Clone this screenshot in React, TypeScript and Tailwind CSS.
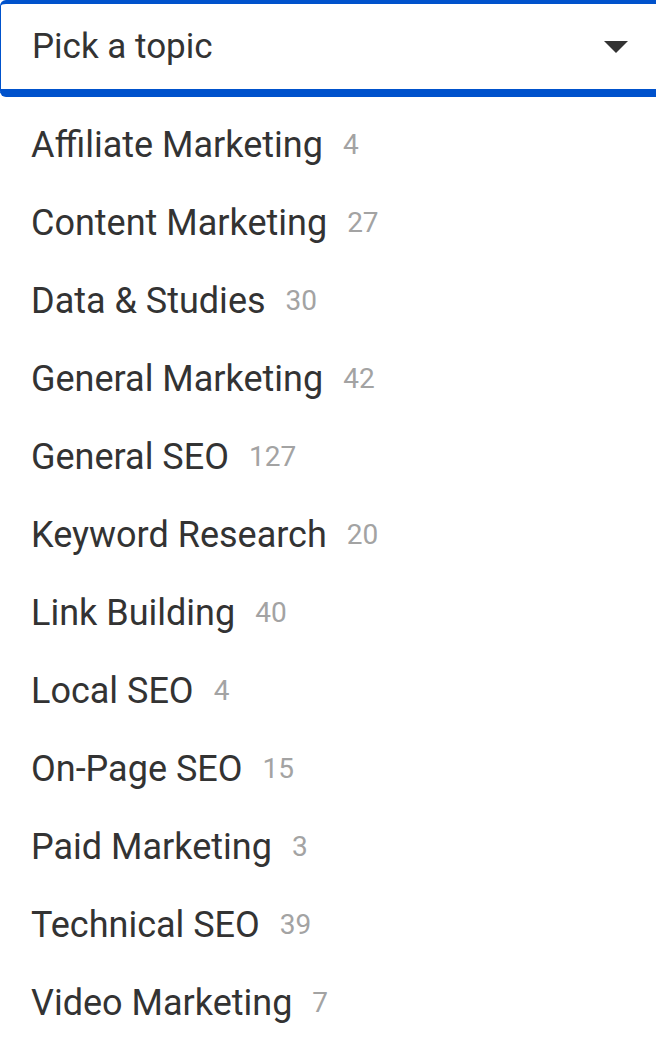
const topics: [string, number][] = [
  ["Affiliate Marketing", 4],
  ["Content Marketing", 27],
  ["Data & Studies", 30],
  ["General Marketing", 42],
  ["General SEO", 127],
  ["Keyword Research", 20],
  ["Link Building", 40],
  ["Local SEO", 4],
  ["On-Page SEO", 15],
  ["Paid Marketing", 3],
  ["Technical SEO", 39],
  ["Video Marketing", 7],
]

export default function App() {
  return (
    <div
      className="w-[656px] h-[1046px] overflow-hidden bg-white text-[#333]"
      style={{ fontFamily: 'Roboto, sans-serif' }}
    >
      <div className="flex h-[97px] items-center justify-between border-t-4 border-b-[8px] border-l border-[#0052cc] rounded-tl-[6px] rounded-bl-[6px] pl-[31px] pr-[28px]">
        <span className="text-[35px] leading-none">Pick a topic</span>
        <svg width="24" height="12" viewBox="0 0 24 12">
          <path d="M0 0h24L12 12z" fill="#333" />
        </svg>
      </div>
      <ul className="pt-[9px]">
        {topics.map(([name, count]) => (
          <li key={name} className="flex h-[78px] items-center pl-[31px]">
            <span className="text-[36px] leading-none">{name}</span>
            <span className="ml-[20px] text-[28px] leading-none text-[#a3a3a3]">{count}</span>
          </li>
        ))}
      </ul>
    </div>
  )
}
